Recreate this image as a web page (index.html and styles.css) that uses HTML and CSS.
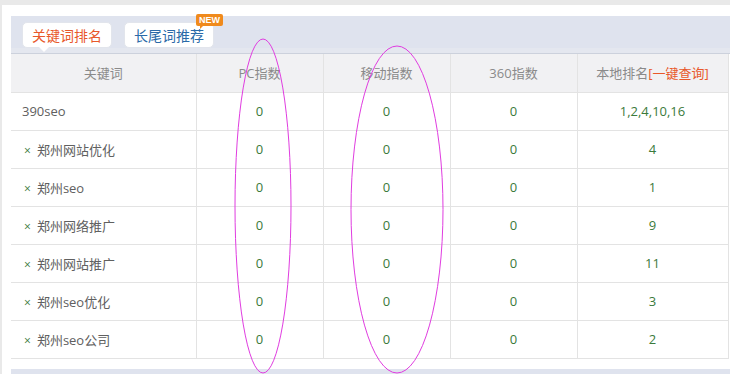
FILE: index.html
```html
<!DOCTYPE html>
<html lang="zh">
<head>
<meta charset="utf-8">
<link rel="stylesheet" href="styles.css">
</head>
<body>
<div class="page">
  <div class="panel">
    <div class="tabbar">
      <span class="tab tab-active">关键词排名</span>
      <span class="tab tab-blue">长尾词推荐<span class="badge">NEW</span></span>
    </div>
    <table class="grid">
      <colgroup>
        <col class="c1"><col class="c2"><col class="c2"><col class="c2"><col class="c5">
      </colgroup>
      <thead>
        <tr><th>关键词</th><th>PC指数</th><th>移动指数</th><th>360指数</th><th>本地排名<span class="hl">[一键查询]</span></th></tr>
      </thead>
      <tbody>
        <tr><td class="kw">390seo</td><td>0</td><td>0</td><td>0</td><td>1,2,4,10,16</td></tr>
        <tr><td class="kw"><span class="x">×</span>郑州网站优化</td><td>0</td><td>0</td><td>0</td><td>4</td></tr>
        <tr><td class="kw"><span class="x">×</span>郑州seo</td><td>0</td><td>0</td><td>0</td><td>1</td></tr>
        <tr><td class="kw"><span class="x">×</span>郑州网络推广</td><td>0</td><td>0</td><td>0</td><td>9</td></tr>
        <tr><td class="kw"><span class="x">×</span>郑州网站推广</td><td>0</td><td>0</td><td>0</td><td>11</td></tr>
        <tr><td class="kw"><span class="x">×</span>郑州seo优化</td><td>0</td><td>0</td><td>0</td><td>3</td></tr>
        <tr><td class="kw"><span class="x">×</span>郑州seo公司</td><td>0</td><td>0</td><td>0</td><td>2</td></tr>
      </tbody>
    </table>
    <div class="footbar"></div>
  </div>
  <svg class="marks" width="730" height="374" viewBox="0 0 730 374">
    <ellipse cx="263" cy="206" rx="28" ry="167" fill="none" stroke="#e03ce0" stroke-width="1"/>
    <ellipse cx="397" cy="209.5" rx="46" ry="163.5" fill="none" stroke="#e03ce0" stroke-width="1"/>
  </svg>
</div>
</body>
</html>
```

FILE: styles.css
```css
* { box-sizing: border-box; }
html, body { margin: 0; padding: 0; }
body {
  width: 730px;
  height: 374px;
  overflow: hidden;
  background: #e9e9e9;
  font-family: "Open Sans", "Noto Sans CJK SC", sans-serif;
}
.page {
  position: relative;
  width: 730px;
  height: 374px;
  padding-top: 5px;
  padding-left: 2px;
}
.panel {
  background: #fff;
  height: 369px;
  padding: 11px 0 0 9px;
}
.tabbar {
  background: #dfe3ee;
  height: 38px;
  display: flex;
  align-items: flex-start;
  gap: 12px;
  padding: 6px 0 0 11px;
  border-bottom: 1px solid #ccd1dc;
  box-shadow: inset 0 -5px 0 #e4e7ef;
}
.tab {
  position: relative;
  display: inline-flex;
  align-items: center;
  justify-content: center;
  height: 26px;
  width: 90px;
  background: #fff;
  border: 1px solid #e2e5ec;
  border-radius: 5px;
  font-size: 14px;
  font-family: "Noto Sans CJK SC", sans-serif;
}
.tab-active { color: #e8582a; }
.tab-active::after {
  content: "";
  position: absolute;
  left: 16px;
  bottom: -5px;
  border-left: 5px solid transparent;
  border-right: 5px solid transparent;
  border-top: 5px solid #fff;
}
.tab-blue { color: #2a6aa8; }
.badge {
  position: absolute;
  right: -10px;
  top: -9px;
  background: #f08a1c;
  color: #fff;
  font-family: "Liberation Sans", sans-serif;
  font-size: 9px;
  font-weight: bold;
  line-height: 12px;
  padding: 0 3px;
  border-radius: 2px;
}
.badge::after {
  content: "";
  position: absolute;
  left: 4px;
  bottom: -3px;
  border-left: 3px solid #f08a1c;
  border-bottom: 3px solid transparent;
}
.grid {
  border-collapse: collapse;
  table-layout: fixed;
  width: 717px;
  font-size: 13px;
}
.c1 { width: 185px; }
.c2 { width: 127px; }
.c5 { width: 151px; }
.grid th, .grid td {
  border: 1px solid #e3e3e3;
  height: 38px;
  text-align: center;
  padding: 0;
}
.grid th {
  background: #f1f1f3;
  color: #8a8a8a;
  font-weight: normal;
  height: 38px;
  border-top: none;
}
.grid td { color: #3b7a3b; }
.grid td.kw {
  text-align: left;
  padding-left: 11px;
  color: #606060;
  font-size: 13px;
}
.grid tr > :first-child { border-left: none; }
.x {
  color: #3b7a3b;
  font-size: 12px;
  margin-left: 2px;
  margin-right: 6px;
}
.hl { color: #e8582a; }
.footbar {
  margin-top: 10px;
  height: 10px;
  background: #dfe3ee;
}
.marks {
  position: absolute;
  left: 0;
  top: 0;
  pointer-events: none;
}
```
